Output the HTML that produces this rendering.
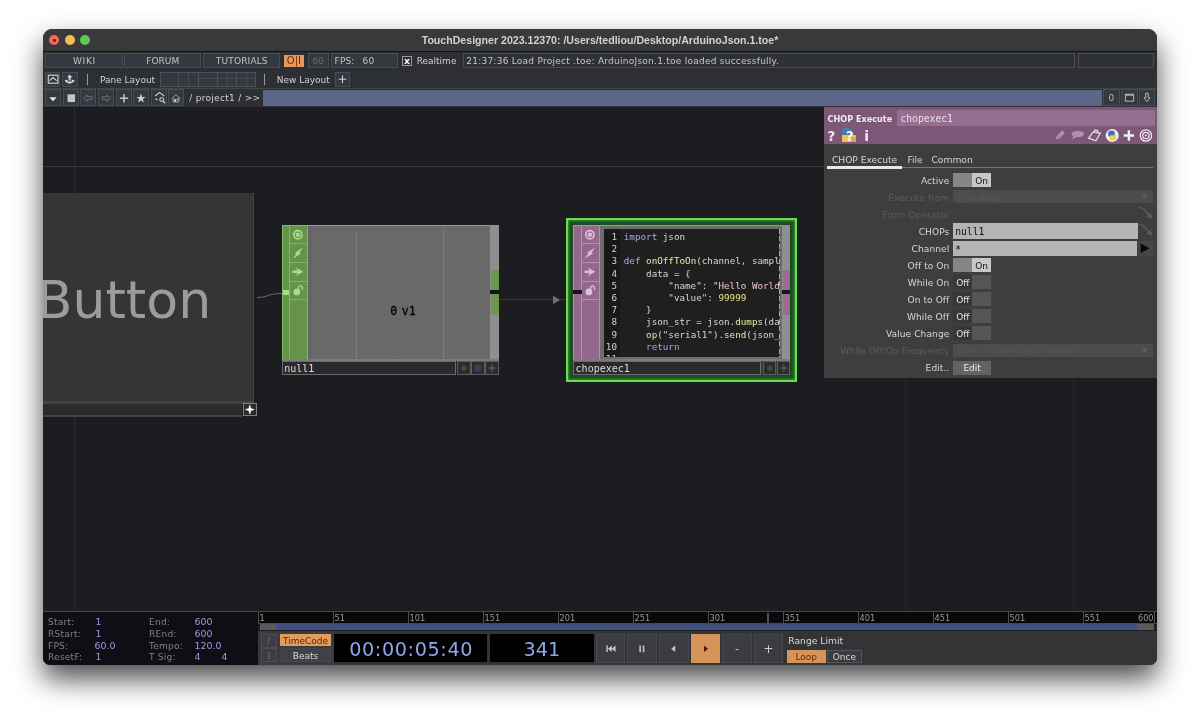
<!DOCTYPE html>
<html lang="en">
<head>
<meta charset="utf-8">
<title>TouchDesigner 2023.12370</title>
<style>
*{box-sizing:border-box;margin:0;padding:0}
html,body{width:1200px;height:723px;overflow:hidden;background:#fff}
body{font-family:"DejaVu Sans","Liberation Sans",sans-serif;font-size:9px;color:#cfcfcf;position:relative}
.win{position:absolute;left:43px;top:29px;width:1114px;height:636px;border-radius:9px 9px 7px 7px;overflow:hidden;background:#1c1d21}
.pg{position:absolute;left:-43px;top:-29px;width:1200px;height:723px;will-change:transform}
.pg div,.pg svg,.pg span.a{position:absolute}
.shadow{position:absolute;left:43px;top:29px;width:1114px;height:636px;border-radius:9px 9px 7px 7px;box-shadow:0 14px 28px 0 rgba(0,0,0,.70)}
.t{white-space:pre}
.m{white-space:pre;font-family:"DejaVu Sans Mono","Liberation Mono",monospace}
.b{background:#343941;border:1px solid #474c55}
.c{text-align:center}
</style>
</head>
<body>
<div class="shadow"></div>
<div class="win"><div class="pg">
<div style="left:43px;top:29px;width:1114px;height:22px;background:#39393b"></div>
<div style="left:43px;top:51px;width:1114px;height:1px;background:#141416"></div>
<div style="left:49.2px;top:35.2px;width:10.2px;height:10.2px;border-radius:50%;background:#ee6a5f"></div>
<div style="left:52.9px;top:38.9px;width:2.8px;height:2.8px;border-radius:50%;background:#7d120c"></div>
<div style="left:64.5px;top:35.2px;width:10.2px;height:10.2px;border-radius:50%;background:#f5bd4f"></div>
<div style="left:79.9px;top:35.2px;width:10.2px;height:10.2px;border-radius:50%;background:#62c554"></div>
<div class="t" style="left:43px;top:32px;font-size:10.6px;line-height:16px;height:16px;color:#d2d2d2;width:1114px;text-align:center;font-family:'Liberation Sans',sans-serif;font-weight:bold;">TouchDesigner 2023.12370: /Users/tedliou/Desktop/ArduinoJson.1.toe*</div>
<div style="left:43px;top:52px;width:1114px;height:55px;background:#2d2f34"></div>
<div class="b" style="left:45px;top:53px;width:77.5px;height:15px;"></div>
<div class="t" style="left:45.7px;top:54px;font-size:9px;line-height:14px;height:14px;color:#c2c4c8;width:77.5px;text-align:center;letter-spacing:0.7px;">WIKI</div>
<div class="b" style="left:124.3px;top:53px;width:77px;height:15px;"></div>
<div class="t" style="left:124.3px;top:54px;font-size:9px;line-height:14px;height:14px;color:#c2c4c8;width:77px;text-align:center;letter-spacing:0px;">FORUM</div>
<div class="b" style="left:203.3px;top:53px;width:76.7px;height:15px;"></div>
<div class="t" style="left:203.46px;top:54px;font-size:9px;line-height:14px;height:14px;color:#c2c4c8;width:76.7px;text-align:center;letter-spacing:0.16px;">TUTORIALS</div>
<div style="left:283.7px;top:54.7px;width:20.5px;height:12px;background:#e19a59"></div>
<div class="t" style="left:283.7px;top:53px;font-size:10px;line-height:15px;height:15px;color:#7a2408;width:20.5px;text-align:center;">O|I</div>
<div class="b" style="left:307.5px;top:53px;width:21.5px;height:15px;"></div>
<div class="t" style="left:307.5px;top:54px;font-size:9px;line-height:14px;height:14px;color:#646a73;width:21.5px;text-align:center;">60</div>
<div class="b" style="left:331px;top:53px;width:67px;height:15px;"></div>
<div class="t" style="left:334.6px;top:54px;font-size:9px;line-height:14px;height:14px;color:#c2c4c8;word-spacing:1.1px;letter-spacing:.12px;">FPS:  60</div>
<div style="left:402px;top:56px;width:10px;height:10px;border:1px solid #9c9c9c;background:#2d2f34"></div>
<div class="t" style="left:402px;top:53px;font-size:9.4px;line-height:15px;height:15px;color:#ffffff;width:10px;text-align:center;font-weight:bold;">x</div>
<div class="t" style="left:416.7px;top:54px;font-size:9px;line-height:14px;height:14px;color:#d2d2d2;">Realtime</div>
<div style="left:463px;top:53px;width:612px;height:15.2px;background:#2e3137;border:1px solid #494c53"></div>
<div class="t" style="left:466.2px;top:54px;font-size:9px;line-height:14px;height:14px;color:#c6c8cc;letter-spacing:.25px;">21:37:36 Load Project .toe: ArduinoJson.1.toe loaded successfully.</div>
<div style="left:1078px;top:53px;width:75.5px;height:15.2px;background:#2e3137;border:1px solid #494c53"></div>
<div class="b" style="left:45.2px;top:72.4px;width:15.3px;height:14.4px;"></div>
<svg style="left:45.2px;top:72.4px" width="15.3" height="14.4" viewBox="0 0 15.3 14.4"><rect x="3.3" y="3.2" width="9.6" height="8" fill="none" stroke="#d8d8d8" stroke-width="1.1"/><path d="M4.6 8.6 L8 5.6 L11.6 8.6" fill="none" stroke="#d8d8d8" stroke-width="1.1"/></svg>
<div class="b" style="left:62.4px;top:72.4px;width:15.4px;height:14.4px;"></div>
<svg style="left:62.4px;top:72.4px" width="15.4" height="14.4" viewBox="0 0 15.4 14.4"><path d="M7.7 2.6 L10.3 5.6 H8.6 V8.6 H6.8 V5.6 H5.1 Z" fill="#d8d8d8"/><path d="M2.6 8.4 L5.6 7.6 L5.6 9.4 L9.8 9.4 L9.8 7.6 L12.8 8.4 L11.4 10.2 L7.7 11.8 L4 10.2 Z" fill="#d8d8d8"/></svg>
<div style="left:87px;top:73.6px;width:1px;height:11.4px;background:#9a9a9a"></div>
<div class="t" style="left:99.9px;top:73px;font-size:9px;line-height:14px;height:14px;color:#d2d2d2;">Pane Layout</div>
<div style="left:160px;top:72px;width:95.5px;height:14.6px;background:#343941;border:1px solid #4b5059"></div>
<div style="left:178px;top:72px;width:1px;height:14.6px;background:#4b5059"></div>
<div style="left:197.5px;top:72px;width:1px;height:14.6px;background:#4b5059"></div>
<div style="left:217px;top:72px;width:1px;height:14.6px;background:#4b5059"></div>
<div style="left:236px;top:72px;width:1px;height:14.6px;background:#4b5059"></div>
<div style="left:188.3px;top:73px;width:1px;height:13px;background:#464b54"></div>
<div style="left:198.5px;top:78px;width:18.5px;height:1px;background:#464b54"></div>
<div style="left:218px;top:78px;width:18px;height:1px;background:#464b54"></div>
<div style="left:227px;top:73px;width:1px;height:13px;background:#464b54"></div>
<div style="left:237px;top:78px;width:18px;height:1px;background:#464b54"></div>
<div style="left:246px;top:73px;width:1px;height:13px;background:#464b54"></div>
<div style="left:264.2px;top:73.6px;width:1px;height:11.4px;background:#9a9a9a"></div>
<div class="t" style="left:276.7px;top:73px;font-size:9px;line-height:14px;height:14px;color:#d2d2d2;">New Layout</div>
<div class="b" style="left:335.3px;top:72.4px;width:15px;height:14.4px;"></div>
<svg style="left:335.3px;top:72.4px" width="15" height="14.4" viewBox="0 0 15 14.4"><path d="M7.5 3.4 V11 M3.7 7.2 H11.3" stroke="#d0d0d0" stroke-width="1.1" fill="none"/></svg>
<div style="left:43px;top:88.4px;width:1114px;height:0.8px;background:#3a4a3c"></div>
<div class="b" style="left:44.9px;top:89.3px;width:16px;height:16.3px;"></div>
<div class="b" style="left:62.55px;top:89.3px;width:16px;height:16.3px;"></div>
<div class="b" style="left:80.2px;top:89.3px;width:16px;height:16.3px;"></div>
<div class="b" style="left:97.85px;top:89.3px;width:16px;height:16.3px;"></div>
<div class="b" style="left:115.5px;top:89.3px;width:16px;height:16.3px;"></div>
<div class="b" style="left:133.15px;top:89.3px;width:16px;height:16.3px;"></div>
<div class="b" style="left:150.8px;top:89.3px;width:16px;height:16.3px;"></div>
<div class="b" style="left:168.45px;top:89.3px;width:16px;height:16.3px;"></div>
<svg style="left:44.9px;top:90px" width="16" height="16.3" viewBox="0 0 16 16.3"><path d="M4.3 7.3 H11.7 L8 11.3 Z" fill="#e4e4e4"/></svg>
<svg style="left:62.55px;top:90px" width="16" height="16.3" viewBox="0 0 16 16.3"><rect x="4.5" y="4.3" width="7.6" height="7.8" fill="#c4c4cc"/></svg>
<svg style="left:80.2px;top:90px" width="16" height="16.3" viewBox="0 0 16 16.3"><path d="M3.6 8.2 L7.2 5 V6.8 H12 V9.6 H7.2 V11.4 Z" fill="none" stroke="#6a6f78" stroke-width="1"/></svg>
<svg style="left:97.85px;top:90px" width="16" height="16.3" viewBox="0 0 16 16.3"><path d="M12.4 8.2 L8.8 5 V6.8 H4 V9.6 H8.8 V11.4 Z" fill="none" stroke="#6a6f78" stroke-width="1"/></svg>
<svg style="left:115.5px;top:90px" width="16" height="16.3" viewBox="0 0 16 16.3"><path d="M8 4 V12.4 M3.8 8.2 H12.2" stroke="#c8c8cc" stroke-width="1.5" fill="none"/></svg>
<svg style="left:133.15px;top:90px" width="16" height="16.3" viewBox="0 0 16 16.3"><path d="M8 3.6 L9.2 6.9 L12.7 7 L9.9 9.1 L10.9 12.5 L8 10.5 L5.1 12.5 L6.1 9.1 L3.3 7 L6.8 6.9 Z" fill="#ccccd0"/></svg>
<svg style="left:150.8px;top:90px" width="16" height="16.3" viewBox="0 0 16 16.3"><path d="M4.2 6 L8.5 2.4 L13.2 6 M4.5 8.7 L6.5 10" stroke="#d0d0d0" stroke-width="1.1" fill="none"/><circle cx="10.7" cy="9.6" r="1.9" fill="none" stroke="#d0d0d0" stroke-width="1.1"/><path d="M12 11 L14 13.2" stroke="#d0d0d0" stroke-width="1.3"/></svg>
<svg style="left:168.45px;top:90px" width="16" height="16.3" viewBox="0 0 16 16.3"><path d="M3.8 8.4 L8 4.6 L12.2 8.4 M5 7.8 V12 H11 V7.8" stroke="#9a9ea6" stroke-width="1" fill="none"/><rect x="6.2" y="9" width="2" height="3" fill="#c8c8c8"/><rect x="8.8" y="8.6" width="1.6" height="1.6" fill="#c8c8c8"/></svg>
<div class="t" style="left:189.2px;top:91px;font-size:9px;line-height:14px;height:14px;color:#d2d2d2;letter-spacing:.3px;">/ project1 / >></div>
<div style="left:263px;top:89.6px;width:839px;height:16.2px;background:#5c6688"></div>
<div class="b" style="left:1102.8px;top:89.3px;width:17.1px;height:16.7px;"></div>
<div class="b" style="left:1121px;top:89.3px;width:16.8px;height:16.7px;"></div>
<div class="b" style="left:1139px;top:89.3px;width:16px;height:16.7px;"></div>
<div class="t" style="left:1102.8px;top:91px;font-size:9px;line-height:14px;height:14px;color:#b8b8b8;width:17.1px;text-align:center;">0</div>
<svg style="left:1121px;top:89.3px" width="16.8" height="16.7" viewBox="0 0 16.8 16.7"><rect x="4.4" y="5.2" width="8.2" height="7" fill="none" stroke="#b4b4b4" stroke-width="1"/><path d="M4.4 6 H12.6" stroke="#b4b4b4" stroke-width="1.4"/></svg>
<svg style="left:1139px;top:89.3px" width="16" height="16.7" viewBox="0 0 16 16.7"><path d="M6.8 4.2 H9.2 V8.8 H11 L8 12.8 L5 8.8 H6.8 Z" fill="none" stroke="#b4b4b4" stroke-width="1"/></svg>
<div style="left:43px;top:107px;width:1114px;height:504.5px;background:#1c1d21"></div>
<div style="left:238px;top:107px;width:1px;height:504px;background:#1d1e23"></div>
<div style="left:405px;top:107px;width:1px;height:504px;background:#1d1e23"></div>
<div style="left:570px;top:107px;width:1px;height:504px;background:#1d1e23"></div>
<div style="left:741px;top:107px;width:1px;height:504px;background:#1d1e23"></div>
<div style="left:43px;top:503px;width:1114px;height:1px;background:#1d1e23"></div>
<div style="left:73.6px;top:107px;width:1px;height:504px;background:#2a2b30"></div>
<div style="left:905.2px;top:107px;width:1px;height:504px;background:#27282d"></div>
<div style="left:1072.6px;top:107px;width:1px;height:504px;background:#27282d"></div>
<div style="left:43px;top:166px;width:1114px;height:1px;background:#37383c"></div>
<div style="left:43px;top:193px;width:211.3px;height:208px;background:#353535;border-right:1px solid #454545"></div>
<div style="left:43px;top:401px;width:211.3px;height:2.8px;background:#424242"></div>
<div style="left:43px;top:403.8px;width:198.8px;height:10.8px;background:#2b2b2c"></div>
<div style="left:43px;top:414.6px;width:199px;height:2px;background:#424242"></div>
<div style="left:243px;top:402.6px;width:13.6px;height:13.2px;background:#2b2b2c;border:1px solid #808080"></div>
<svg style="left:243px;top:402.6px" width="13.6" height="13.2" viewBox="0 0 13.6 13.2"><path d="M6.8 2.2 L7.8 5.6 L11.2 6.6 L7.8 7.6 L6.8 11 L5.8 7.6 L2.4 6.6 L5.8 5.6 Z" fill="#ffffff" stroke="#ffffff" stroke-width=".6" stroke-linejoin="round"/></svg>
<div class="t" style="left:36.7px;top:268px;font-size:52.1px;line-height:64px;height:64px;color:#9c9c9c;">Button</div>
<svg style="left:250px;top:280px" width="40" height="30" viewBox="0 0 40 30"><path d="M7 17.5 C19 17.4 17 13.5 32 13.5" stroke="#6a6b66" stroke-width="1" fill="none"/></svg>
<div style="left:499px;top:298.8px;width:75px;height:1px;background:#38393c"></div>
<svg style="left:550px;top:293px" width="12" height="12" viewBox="0 0 12 12"><path d="M3 2.6 L10 6.9 L3 11.2 Z" fill="#707072"/></svg>
<div style="left:282px;top:225px;width:26.2px;height:134.6px;background:#66934a;border:1px solid #82bc60"></div>
<div style="left:289px;top:225px;width:1px;height:134.6px;background:#7fb65e"></div>
<div style="left:290px;top:243.4px;width:18px;height:1px;background:#7fb65e"></div>
<div style="left:290px;top:261.9px;width:18px;height:1px;background:#7fb65e"></div>
<div style="left:290px;top:280.5px;width:18px;height:1px;background:#7fb65e"></div>
<div style="left:290px;top:299px;width:18px;height:1px;background:#7fb65e"></div>
<div style="left:282.6px;top:289.8px;width:6.8px;height:5px;background:#a6e07c"></div>
<svg style="left:290px;top:225px" width="19" height="80" viewBox="0 0 19 80"><circle cx="7.9" cy="9.7" r="4.1" fill="none" stroke="#a9d98e" stroke-width="1.7"/><circle cx="7.9" cy="9.7" r="2.3" fill="#a9d98e"/><path d="M13.100000000000001 22.5 L4.9 27.8 L8.200000000000001 29.6 Z M2.7 33.7 L10.9 28.400000000000002 L7.6000000000000005 26.6 Z" fill="#a9d98e"/><path d="M2.5 45.5 H7.5 L5.9 42.5 L13.3 46.7 L5.9 50.900000000000006 L7.5 47.900000000000006 H2.5 Z" fill="#a9d98e"/><circle cx="6.9" cy="66.89999999999999" r="3.4" fill="#a9d98e"/><path d="M8.5 64.5 V62.3 A2.1 2.1 0 0 1 12.5 62.699999999999996 V65.1" fill="none" stroke="#a9d98e" stroke-width="1.4"/></svg>
<div style="left:308.2px;top:225px;width:181.8px;height:134.6px;background:#696969"></div>
<div style="left:308.2px;top:225px;width:190.8px;height:1px;background:#9a9a9a"></div>
<div style="left:308.2px;top:226px;width:2.8px;height:133.6px;background:#646464"></div>
<div style="left:356.3px;top:232px;width:1px;height:126px;background:#7e7e7e"></div>
<div style="left:443px;top:230px;width:1px;height:128px;background:#7e7e7e"></div>
<div style="left:398.3px;top:236px;width:1px;height:120px;background:repeating-linear-gradient(#727272 0 2px,#696969 2px 4px)"></div>
<div style="left:490px;top:225px;width:9px;height:134.6px;background:#8f8f91"></div>
<div style="left:490.8px;top:270px;width:8.2px;height:20.4px;background:#6b974c"></div>
<div style="left:490.8px;top:294px;width:8.2px;height:20.6px;background:#6b974c"></div>
<div style="left:490px;top:290.4px;width:9px;height:3.6px;background:#141518"></div>
<div style="left:282px;top:358.6px;width:217px;height:2px;background:#7c7c7c"></div>
<div class="m" style="left:390.2px;top:302px;font-size:11.6px;line-height:18px;height:18px;color:#060606;-webkit-text-stroke:.35px #060606;">0</div>
<div class="m" style="left:401.8px;top:302px;font-size:11.6px;line-height:18px;height:18px;color:#060606;-webkit-text-stroke:.35px #060606;">v1</div>
<div style="left:282.2px;top:360.6px;width:173.4px;height:14.2px;background:#2a2a2c;border:1px solid #6a6a6a"></div>
<div class="m" style="left:284.2px;top:361px;font-size:10px;line-height:15px;height:15px;color:#dcdcdc;">null1</div>
<div style="left:457.2px;top:360.6px;width:13.8px;height:14.2px;background:#2c2c2e;border:1px solid #5c5c5c"></div>
<div style="left:471.2px;top:360.6px;width:13.8px;height:14.2px;background:#2c2c2e;border:1px solid #5c5c5c"></div>
<div style="left:485.2px;top:360.6px;width:13.8px;height:14.2px;background:#2c2c2e;border:1px solid #5c5c5c"></div>
<svg style="left:457.2px;top:360.6px" width="42" height="14.2" viewBox="0 0 42 14.2"><circle cx="6.9" cy="7.1" r="2.7" fill="#47474a"/><rect x="17.4" y="3.8" width="6.8" height="6.8" fill="#3b3c5e"/><path d="M34.9 3.2 L35.8 6.2 L38.8 7.1 L35.8 8 L34.9 11 L34 8 L31 7.1 L34 6.2 Z" fill="#555558" stroke="#555558" stroke-width=".5"/></svg>
<div style="left:566.2px;top:218.2px;width:231.2px;height:163.8px;background:#1d4b22;border:2px solid #62e04a;box-shadow:inset 0 0 2.5px 1px #3c9a34"></div>
<div style="left:573px;top:225px;width:27px;height:134.6px;background:#93688c;border:1px solid #b88db1"></div>
<div style="left:581px;top:225px;width:1px;height:134.6px;background:#b88db1"></div>
<div style="left:582px;top:243.4px;width:18px;height:1px;background:#b88db1"></div>
<div style="left:582px;top:261.9px;width:18px;height:1px;background:#b88db1"></div>
<div style="left:582px;top:280.5px;width:18px;height:1px;background:#b88db1"></div>
<div style="left:582px;top:299px;width:18px;height:1px;background:#b88db1"></div>
<svg style="left:582px;top:225px" width="19" height="80" viewBox="0 0 19 80"><circle cx="7.9" cy="9.7" r="4.1" fill="none" stroke="#dfbcd9" stroke-width="1.7"/><circle cx="7.9" cy="9.7" r="2.3" fill="#dfbcd9"/><path d="M13.100000000000001 22.5 L4.9 27.8 L8.200000000000001 29.6 Z M2.7 33.7 L10.9 28.400000000000002 L7.6000000000000005 26.6 Z" fill="#dfbcd9"/><path d="M2.5 45.5 H7.5 L5.9 42.5 L13.3 46.7 L5.9 50.900000000000006 L7.5 47.900000000000006 H2.5 Z" fill="#dfbcd9"/><circle cx="6.9" cy="66.89999999999999" r="3.4" fill="#dfbcd9"/><path d="M8.5 64.5 V62.3 A2.1 2.1 0 0 1 12.5 62.699999999999996 V65.1" fill="none" stroke="#dfbcd9" stroke-width="1.4"/></svg>
<div style="left:573px;top:290.4px;width:8.6px;height:3.6px;background:#141518"></div>
<div style="left:600px;top:225px;width:181.8px;height:134.6px;background:#6c6c6c"></div>
<div style="left:600px;top:225px;width:190.4px;height:1px;background:#9a9a9a"></div>
<div style="left:604px;top:228.5px;width:175.4px;height:128.5px;background:#1f1f1f"></div>
<div style="left:604px;top:228.5px;width:16.4px;height:128.5px;background:#191919"></div>
<div style="left:781.8px;top:225px;width:8.6px;height:134.6px;background:#8f8f91"></div>
<div style="left:782.6px;top:270px;width:7px;height:20.4px;background:#9a6c94"></div>
<div style="left:782.6px;top:294px;width:7px;height:20.6px;background:#9a6c94"></div>
<div style="left:781.8px;top:290.4px;width:8.6px;height:3.6px;background:#141518"></div>
<div style="left:573px;top:358.6px;width:217.4px;height:2.2px;background:#7c7c7c"></div>
<div style="left:604px;top:228.5px;width:175px;height:128.5px;overflow:hidden"><div class="m" style="left:0;top:0.50px;height:15px;line-height:15px;font-size:9.25px;width:175px"><span class="a" style="left:0;width:13px;text-align:right;color:#d2d2d2">1</span><span class="a" style="left:19.8px"><span style="color:#a8a8f0">import</span><span style="color:#d6d6d6"> json</span></span></div><div class="m" style="left:0;top:12.50px;height:15px;line-height:15px;font-size:9.25px;width:175px"><span class="a" style="left:0;width:13px;text-align:right;color:#d2d2d2">2</span><span class="a" style="left:19.8px"></span></div><div class="m" style="left:0;top:24.50px;height:15px;line-height:15px;font-size:9.25px;width:175px"><span class="a" style="left:0;width:13px;text-align:right;color:#d2d2d2">3</span><span class="a" style="left:19.8px"><span style="color:#a8a8f0">def</span><span style="color:#d6d6d6"> </span><span style="color:#e8e8a2">onOffToOn</span><span style="color:#d6d6d6">(channel, sampl</span></span></div><div class="m" style="left:0;top:37.50px;height:15px;line-height:15px;font-size:9.25px;width:175px"><span class="a" style="left:0;width:13px;text-align:right;color:#d2d2d2">4</span><span class="a" style="left:19.8px"><span style="color:#d6d6d6">    data = {</span></span></div><div class="m" style="left:0;top:49.50px;height:15px;line-height:15px;font-size:9.25px;width:175px"><span class="a" style="left:0;width:13px;text-align:right;color:#d2d2d2">5</span><span class="a" style="left:19.8px"><span style="color:#d6d6d6">        "name": </span><span style="color:#f0c4c4">"Hello World</span></span></div><div class="m" style="left:0;top:61.50px;height:15px;line-height:15px;font-size:9.25px;width:175px"><span class="a" style="left:0;width:13px;text-align:right;color:#d2d2d2">6</span><span class="a" style="left:19.8px"><span style="color:#d6d6d6">        "value": </span><span style="color:#e4e48c">99999</span></span></div><div class="m" style="left:0;top:73.50px;height:15px;line-height:15px;font-size:9.25px;width:175px"><span class="a" style="left:0;width:13px;text-align:right;color:#d2d2d2">7</span><span class="a" style="left:19.8px"><span style="color:#d6d6d6">    }</span></span></div><div class="m" style="left:0;top:85.50px;height:15px;line-height:15px;font-size:9.25px;width:175px"><span class="a" style="left:0;width:13px;text-align:right;color:#d2d2d2">8</span><span class="a" style="left:19.8px"><span style="color:#d6d6d6">    json_str = json.</span><span style="color:#e8e8a2">dumps</span><span style="color:#d6d6d6">(da</span></span></div><div class="m" style="left:0;top:98.50px;height:15px;line-height:15px;font-size:9.25px;width:175px"><span class="a" style="left:0;width:13px;text-align:right;color:#d2d2d2">9</span><span class="a" style="left:19.8px"><span style="color:#d6d6d6">    </span><span style="color:#e8e8a2">op</span><span style="color:#d6d6d6">("serial1").</span><span style="color:#e8e8a2">send</span><span style="color:#d6d6d6">(json_</span></span></div><div class="m" style="left:0;top:110.50px;height:15px;line-height:15px;font-size:9.25px;width:175px"><span class="a" style="left:0;width:13px;text-align:right;color:#d2d2d2">10</span><span class="a" style="left:19.8px"><span style="color:#d6d6d6">    </span><span style="color:#a8a8f0">return</span></span></div><div class="m" style="left:0;top:122.50px;height:15px;line-height:15px;font-size:9.25px;width:175px"><span class="a" style="left:0;width:13px;text-align:right;color:#d2d2d2">11</span><span class="a" style="left:19.8px"></span></div></div>
<div style="left:778.6px;top:229px;width:1.1px;height:128px;background:repeating-linear-gradient(#a4a4a4 0 5px,#3a3a3a 5px 7.5px)"></div>
<div style="left:573.2px;top:360.8px;width:188.2px;height:14.1px;background:#2a2a2c;border:1px solid #6a6a6a"></div>
<div class="m" style="left:575.6px;top:361px;font-size:10px;line-height:15px;height:15px;color:#dcdcdc;">chopexec1</div>
<div style="left:762.8px;top:360.8px;width:13.7px;height:14.1px;background:#2c2c2e;border:1px solid #5c5c5c"></div>
<div style="left:776.7px;top:360.8px;width:13.7px;height:14.1px;background:#2c2c2e;border:1px solid #5c5c5c"></div>
<svg style="left:762.8px;top:360.8px" width="28" height="14.1" viewBox="0 0 28 14.1"><circle cx="6.9" cy="7.1" r="2.7" fill="#47474a"/><path d="M20.8 3.1 L21.7 6.1 L24.7 7 L21.7 7.9 L20.8 10.9 L19.9 7.9 L16.9 7 L19.9 6.1 Z" fill="#555558" stroke="#555558" stroke-width=".5"/></svg>
<div style="left:824.2px;top:107px;width:332.8px;height:270.8px;background:#3e3e3e"></div>
<div style="left:824.2px;top:107px;width:332.8px;height:37.3px;background:#7c5778"></div>
<div style="left:897.2px;top:110px;width:257.4px;height:15.8px;background:#966f90"></div>
<div class="t" style="left:827.6px;top:112px;font-size:9px;line-height:14px;height:14px;color:#f4ecf2;font-family:'DejaVu Sans Condensed','DejaVu Sans',sans-serif;font-weight:bold;font-stretch:condensed;">CHOP Execute</div>
<div class="m" style="left:900.4px;top:111px;font-size:9.7px;line-height:15px;height:15px;color:#eadfe8;">chopexec1</div>
<div class="t" style="left:827.6px;top:127px;font-size:13.4px;line-height:19px;height:19px;color:#f4ecf2;font-weight:bold;">?</div>
<div style="left:842.4px;top:127.8px;width:10px;height:9.2px;background:#4a78ac;border-radius:2px 2px 0 0"></div>
<div style="left:842.4px;top:134.6px;width:13.6px;height:7.8px;background:#e9c94f;border-radius:1px"></div>
<div style="left:850.6px;top:136.6px;width:5.4px;height:5.8px;background:#d4ae42"></div>
<div class="t" style="left:846px;top:127px;font-size:13.4px;line-height:19px;height:19px;color:#fbf7fa;font-weight:bold;">?</div>
<div class="t" style="left:864.2px;top:126px;font-size:13.8px;line-height:20px;height:20px;color:#f4ecf2;font-weight:bold;">i</div>
<svg style="left:1050px;top:126px" width="107" height="18" viewBox="0 0 107 18">
<path d="M8.4 10.8 L13.6 5.6" stroke="#b38eae" stroke-width="3.8" fill="none"/><path d="M5.9 13.4 L6.6 9.6 L9.6 12.4 Z" fill="#b38eae"/>
<ellipse cx="27.8" cy="8" rx="6.2" ry="3.1" fill="#b38eae"/><path d="M23.4 9.4 L22 13.4 L27 10.8 Z" fill="#b38eae"/>
<path d="M38.7 12.2 L43.2 5.9 L50.3 7.3 L45.8 14.8 Z" fill="none" stroke="#eadcE8" stroke-width="1.3"/><path d="M44.2 5.6 L45 3.9 L47.6 4.5 L47.8 6.5" fill="none" stroke="#eadce8" stroke-width="1.3"/>
<circle cx="62.2" cy="9.5" r="6.5" fill="#f4f4f4"/>
<path d="M58.2 10 V6.8 Q58.2 4.4 62 4.4 Q64.8 4.4 64.8 6.6 V8.6 Q64.8 9.8 63.4 9.8 H60.6 Q59.4 9.8 59.4 11 Z" fill="#3c74ad"/>
<path d="M66.2 9 V12.2 Q66.2 14.6 62.4 14.6 Q59.6 14.6 59.6 12.4 V10.6 Q59.6 9.4 61 9.4 H63.8 Q65 9.4 65 8.2 Z" fill="#efcb4e"/>
<path d="M78.9 4.3 V14.7 M73.7 9.5 H84.1" stroke="#f6eef4" stroke-width="2.4" fill="none"/>
<circle cx="95.9" cy="9.5" r="5.7" fill="none" stroke="#f1e6ef" stroke-width="1.3"/><circle cx="95.9" cy="9.5" r="3.2" fill="none" stroke="#f1e6ef" stroke-width="1.3"/><circle cx="95.9" cy="9.5" r="1.1" fill="#f1e6ef"/>
</svg>
<div class="t" style="left:832px;top:153px;font-size:9.1px;line-height:14px;height:14px;color:#d4d4d4;">CHOP Execute</div>
<div class="t" style="left:907.4px;top:153px;font-size:9px;line-height:14px;height:14px;color:#d4d4d4;">File</div>
<div class="t" style="left:931.4px;top:152px;font-size:9.2px;line-height:15px;height:15px;color:#d4d4d4;">Common</div>
<div style="left:827px;top:167.4px;width:326px;height:1px;background:#777"></div>
<div style="left:827px;top:166.4px;width:75.4px;height:2.2px;background:#e8e8e8"></div>
<div class="t" style="left:824.2px;top:174px;font-size:9.1px;line-height:14px;height:14px;color:#d6d6d6;width:125.2px;text-align:right;letter-spacing:.06px;">Active</div>
<div style="left:953.3px;top:173.3px;width:19px;height:13.5px;background:#868686"></div>
<div style="left:972.3px;top:173.3px;width:18.7px;height:13.5px;background:#c8c8c8"></div>
<div class="t" style="left:972.3px;top:174px;font-size:9px;line-height:14px;height:14px;color:#161616;width:18.7px;text-align:center;">On</div>
<div class="t" style="left:824.2px;top:191px;font-size:9.1px;line-height:14px;height:14px;color:#5c5c5c;width:125.2px;text-align:right;letter-spacing:.06px;">Execute from</div>
<div style="left:953.3px;top:190.3px;width:199.5px;height:13px;background:#4c4c4c"></div>
<div class="t" style="left:957px;top:191px;font-size:9px;line-height:14px;height:14px;color:#575757;">This Node</div>
<svg style="left:1141px;top:194.3px" width="8" height="6" viewBox="0 0 8 6"><path d="M0.6 0.8 H7.4 L4 5 Z" fill="#5e5e5e"/></svg>
<div class="t" style="left:824.2px;top:208px;font-size:9.1px;line-height:14px;height:14px;color:#5c5c5c;width:125.2px;text-align:right;letter-spacing:.06px;">From Operator</div>
<div class="t" style="left:824.2px;top:225px;font-size:9.1px;line-height:14px;height:14px;color:#d6d6d6;width:125.2px;text-align:right;letter-spacing:.06px;">CHOPs</div>
<div style="left:953.3px;top:223.3px;width:184.5px;height:15.7px;background:#b4b4b4"></div>
<div class="m" style="left:955.2px;top:224px;font-size:9.7px;line-height:15px;height:15px;color:#0e0e0e;">null1</div>
<div class="t" style="left:824.2px;top:242px;font-size:9.1px;line-height:14px;height:14px;color:#d6d6d6;width:125.2px;text-align:right;letter-spacing:.06px;">Channel</div>
<div style="left:953.3px;top:241px;width:183.5px;height:14.7px;background:#b4b4b4"></div>
<div class="m" style="left:955.2px;top:242px;font-size:9.7px;line-height:15px;height:15px;color:#0e0e0e;">*</div>
<div style="left:1138.4px;top:241px;width:14.4px;height:14.7px;background:#464646"></div>
<svg style="left:1138.4px;top:241px" width="14.4" height="14.7" viewBox="0 0 14.4 14.7"><path d="M2.6 2.6 L11.6 7.3 L2.6 12 Z" fill="#060606"/></svg>
<svg style="left:1137px;top:204.3px" width="18" height="18" viewBox="0 0 18 18"><path d="M2 3.6 C6.4 3.8 7.4 5.6 11.6 10.6" stroke="#5a5a5a" stroke-width="1.5" fill="none"/><path d="M15.6 14.8 L9.4 12.6 L13.6 8.6 Z" fill="#5c5c5c"/></svg>
<svg style="left:1137px;top:221.3px" width="18" height="18" viewBox="0 0 18 18"><path d="M2 3.6 C6.4 3.8 7.4 5.6 11.6 10.6" stroke="#5a5a5a" stroke-width="1.5" fill="none"/><path d="M15.6 14.8 L9.4 12.6 L13.6 8.6 Z" fill="#5c5c5c"/></svg>
<div class="t" style="left:824.2px;top:259px;font-size:9.1px;line-height:14px;height:14px;color:#d6d6d6;width:125.2px;text-align:right;letter-spacing:.06px;">Off to On</div>
<div style="left:953.3px;top:258.3px;width:19px;height:13.5px;background:#868686"></div>
<div style="left:972.3px;top:258.3px;width:18.7px;height:13.5px;background:#c8c8c8"></div>
<div class="t" style="left:972.3px;top:259px;font-size:9px;line-height:14px;height:14px;color:#161616;width:18.7px;text-align:center;">On</div>
<div class="t" style="left:824.2px;top:276px;font-size:9.1px;line-height:14px;height:14px;color:#d6d6d6;width:125.2px;text-align:right;letter-spacing:.06px;">While On</div>
<div style="left:953.3px;top:275.3px;width:19px;height:13.5px;background:#373737"></div>
<div style="left:972.3px;top:275.3px;width:18.7px;height:13.5px;background:#555557"></div>
<div class="t" style="left:953.3px;top:276px;font-size:9px;line-height:14px;height:14px;color:#e2e2e2;width:19px;text-align:center;">Off</div>
<div class="t" style="left:824.2px;top:293px;font-size:9.1px;line-height:14px;height:14px;color:#d6d6d6;width:125.2px;text-align:right;letter-spacing:.06px;">On to Off</div>
<div style="left:953.3px;top:292.3px;width:19px;height:13.5px;background:#373737"></div>
<div style="left:972.3px;top:292.3px;width:18.7px;height:13.5px;background:#555557"></div>
<div class="t" style="left:953.3px;top:293px;font-size:9px;line-height:14px;height:14px;color:#e2e2e2;width:19px;text-align:center;">Off</div>
<div class="t" style="left:824.2px;top:310px;font-size:9.1px;line-height:14px;height:14px;color:#d6d6d6;width:125.2px;text-align:right;letter-spacing:.06px;">While Off</div>
<div style="left:953.3px;top:309.3px;width:19px;height:13.5px;background:#373737"></div>
<div style="left:972.3px;top:309.3px;width:18.7px;height:13.5px;background:#555557"></div>
<div class="t" style="left:953.3px;top:310px;font-size:9px;line-height:14px;height:14px;color:#e2e2e2;width:19px;text-align:center;">Off</div>
<div class="t" style="left:824.2px;top:327px;font-size:9.1px;line-height:14px;height:14px;color:#d6d6d6;width:125.2px;text-align:right;letter-spacing:.06px;">Value Change</div>
<div style="left:953.3px;top:326.3px;width:19px;height:13.5px;background:#373737"></div>
<div style="left:972.3px;top:326.3px;width:18.7px;height:13.5px;background:#555557"></div>
<div class="t" style="left:953.3px;top:327px;font-size:9px;line-height:14px;height:14px;color:#e2e2e2;width:19px;text-align:center;">Off</div>
<div class="t" style="left:824.2px;top:344px;font-size:9.1px;line-height:14px;height:14px;color:#5c5c5c;width:125.2px;text-align:right;letter-spacing:.06px;">While Off/On Frequency</div>
<div style="left:953.3px;top:343.9px;width:199.5px;height:13.4px;background:#4c4c4c"></div>
<div class="t" style="left:957px;top:344px;font-size:9px;line-height:14px;height:14px;color:#555555;">Every Frame (Last Sample)</div>
<svg style="left:1141px;top:347.90000000000003px" width="8" height="6" viewBox="0 0 8 6"><path d="M0.6 0.8 H7.4 L4 5 Z" fill="#5e5e5e"/></svg>
<div class="t" style="left:824.2px;top:361px;font-size:9.1px;line-height:14px;height:14px;color:#d6d6d6;width:125.2px;text-align:right;letter-spacing:.06px;">Edit..</div>
<div style="left:953.3px;top:360.7px;width:37.7px;height:14.3px;background:#646464"></div>
<div class="t" style="left:953.3px;top:361px;font-size:9px;line-height:14px;height:14px;color:#ececec;width:37.7px;text-align:center;">Edit</div>
<div style="left:43px;top:611.4px;width:1114px;height:53.6px;background:#343437"></div>
<div style="left:43px;top:611.4px;width:215px;height:53.6px;background:#0e0e14"></div>
<div style="left:43px;top:611.2px;width:1114px;height:1px;background:#46474b"></div>
<div class="t" style="left:48px;top:615px;font-size:9px;line-height:14px;height:14px;color:#808086;letter-spacing:.25px;">Start:</div>
<div class="t" style="left:149px;top:615px;font-size:9px;line-height:14px;height:14px;color:#808086;letter-spacing:.25px;">End:</div>
<div class="t" style="left:95.4px;top:614px;font-size:9.4px;line-height:15px;height:15px;color:#9c9cea;">1</div>
<div class="t" style="left:194.6px;top:614px;font-size:9.4px;line-height:15px;height:15px;color:#9c9cea;">600</div>
<div class="t" style="left:48px;top:627px;font-size:9px;line-height:14px;height:14px;color:#808086;letter-spacing:.25px;">RStart:</div>
<div class="t" style="left:149px;top:627px;font-size:9px;line-height:14px;height:14px;color:#808086;letter-spacing:.25px;">REnd:</div>
<div class="t" style="left:95.4px;top:626px;font-size:9.4px;line-height:15px;height:15px;color:#9c9cea;">1</div>
<div class="t" style="left:194.6px;top:626px;font-size:9.4px;line-height:15px;height:15px;color:#9c9cea;">600</div>
<div class="t" style="left:48px;top:639px;font-size:9px;line-height:14px;height:14px;color:#808086;letter-spacing:.25px;">FPS:</div>
<div class="t" style="left:149px;top:639px;font-size:9px;line-height:14px;height:14px;color:#808086;letter-spacing:.25px;">Tempo:</div>
<div class="t" style="left:94.6px;top:638px;font-size:9.4px;line-height:15px;height:15px;color:#9c9cea;">60.0</div>
<div class="t" style="left:194.6px;top:638px;font-size:9.4px;line-height:15px;height:15px;color:#9c9cea;">120.0</div>
<div class="t" style="left:48px;top:650px;font-size:9px;line-height:14px;height:14px;color:#808086;letter-spacing:.25px;">ResetF:</div>
<div class="t" style="left:149px;top:650px;font-size:9px;line-height:14px;height:14px;color:#808086;letter-spacing:.25px;">T Sig:</div>
<div class="t" style="left:95.4px;top:649px;font-size:9.4px;line-height:15px;height:15px;color:#9c9cea;">1</div>
<div class="t" style="left:194.6px;top:649px;font-size:9.4px;line-height:15px;height:15px;color:#9c9cea;">4</div>
<div class="t" style="left:221.6px;top:649px;font-size:9.4px;line-height:15px;height:15px;color:#9c9cea;">4</div>
<div style="left:258px;top:612.2px;width:899px;height:10.8px;background:#09090b"></div>
<div style="left:258px;top:622.6px;width:899px;height:1px;background:#4a4a42"></div>
<div style="left:258px;top:612.2px;width:1px;height:10.8px;background:#505046"></div>
<div class="t" style="left:259.6px;top:611px;font-size:8.2px;line-height:14px;height:14px;color:#989898;">1</div>
<div style="left:333px;top:612.2px;width:1px;height:10.8px;background:#505046"></div>
<div class="t" style="left:334.6px;top:611px;font-size:8.2px;line-height:14px;height:14px;color:#989898;">51</div>
<div style="left:408px;top:612.2px;width:1px;height:10.8px;background:#505046"></div>
<div class="t" style="left:409.6px;top:611px;font-size:8.2px;line-height:14px;height:14px;color:#989898;">101</div>
<div style="left:483px;top:612.2px;width:1px;height:10.8px;background:#505046"></div>
<div class="t" style="left:484.6px;top:611px;font-size:8.2px;line-height:14px;height:14px;color:#989898;">151</div>
<div style="left:558px;top:612.2px;width:1px;height:10.8px;background:#505046"></div>
<div class="t" style="left:559.6px;top:611px;font-size:8.2px;line-height:14px;height:14px;color:#989898;">201</div>
<div style="left:633px;top:612.2px;width:1px;height:10.8px;background:#505046"></div>
<div class="t" style="left:634.6px;top:611px;font-size:8.2px;line-height:14px;height:14px;color:#989898;">251</div>
<div style="left:708px;top:612.2px;width:1px;height:10.8px;background:#505046"></div>
<div class="t" style="left:709.6px;top:611px;font-size:8.2px;line-height:14px;height:14px;color:#989898;">301</div>
<div style="left:783px;top:612.2px;width:1px;height:10.8px;background:#505046"></div>
<div class="t" style="left:784.6px;top:611px;font-size:8.2px;line-height:14px;height:14px;color:#989898;">351</div>
<div style="left:858px;top:612.2px;width:1px;height:10.8px;background:#505046"></div>
<div class="t" style="left:859.6px;top:611px;font-size:8.2px;line-height:14px;height:14px;color:#989898;">401</div>
<div style="left:933px;top:612.2px;width:1px;height:10.8px;background:#505046"></div>
<div class="t" style="left:934.6px;top:611px;font-size:8.2px;line-height:14px;height:14px;color:#989898;">451</div>
<div style="left:1008px;top:612.2px;width:1px;height:10.8px;background:#505046"></div>
<div class="t" style="left:1009.6px;top:611px;font-size:8.2px;line-height:14px;height:14px;color:#989898;">501</div>
<div style="left:1083px;top:612.2px;width:1px;height:10.8px;background:#505046"></div>
<div class="t" style="left:1084.6px;top:611px;font-size:8.2px;line-height:14px;height:14px;color:#989898;">551</div>
<div class="t" style="left:1120px;top:611px;font-size:8.2px;line-height:14px;height:14px;color:#989898;width:33.6px;text-align:right;">600</div>
<div style="left:767px;top:613px;width:2.4px;height:9.6px;background:#4a5066"></div>
<div style="left:1154.4px;top:612.2px;width:1px;height:10.8px;background:#5a5a4e"></div>
<div style="left:258px;top:623.6px;width:899px;height:7.4px;background:#1e1f24"></div>
<div style="left:260px;top:624.2px;width:16px;height:6.2px;background:#5a5a5c"></div>
<div style="left:276px;top:624.2px;width:860.6px;height:6.2px;background:#414f7c"></div>
<div style="left:1137px;top:624.2px;width:16.6px;height:6.2px;background:#5a5a5c"></div>
<div style="left:258px;top:631px;width:75.6px;height:34px;background:#393b41"></div>
<div class="b" style="left:260.8px;top:633.8px;width:16px;height:13.8px;background:#3b3d43;border-color:#4c4e54"></div>
<div class="b" style="left:260.8px;top:648.2px;width:16px;height:13.4px;background:#3b3d43;border-color:#4c4e54"></div>
<div class="t" style="left:260.8px;top:634px;font-size:9px;line-height:14px;height:14px;color:#707078;width:16px;text-align:center;">/</div>
<div class="t" style="left:260.8px;top:649px;font-size:9px;line-height:14px;height:14px;color:#707078;width:16px;text-align:center;font-family:'DejaVu Serif',serif;">I</div>
<div style="left:279.8px;top:634.2px;width:51.4px;height:12.1px;background:#e19c5c"></div>
<div class="t" style="left:279.8px;top:634px;font-size:9px;line-height:14px;height:14px;color:#64200a;width:51.4px;text-align:center;">TimeCode</div>
<div style="left:279.8px;top:647.8px;width:51.4px;height:14.2px;background:#3f4147;border:1px solid #44464c"></div>
<div class="t" style="left:279.8px;top:649px;font-size:9px;line-height:14px;height:14px;color:#d8d8d8;width:51.4px;text-align:center;">Beats</div>
<div style="left:333.6px;top:633.8px;width:153.2px;height:29.2px;background:#000;border-bottom:1px solid #2e2e30"></div>
<div class="t" style="left:333.6px;top:636px;font-size:19.2px;line-height:27px;height:27px;color:#8fa6ea;width:155px;text-align:center;letter-spacing:.62px;">00:00:05:40</div>
<div style="left:489.8px;top:633.8px;width:103.9px;height:29.2px;background:#000;border-bottom:1px solid #2e2e30"></div>
<div class="t" style="left:489.8px;top:636px;font-size:19.2px;line-height:27px;height:27px;color:#8fa6ea;width:104px;text-align:center;">341</div>
<div style="left:595.8px;top:633.8px;width:29.6px;height:29.2px;background:#3b3c41;border:1px solid #47484d"></div>
<div style="left:627.4px;top:633.8px;width:29.6px;height:29.2px;background:#3b3c41;border:1px solid #47484d"></div>
<div style="left:659px;top:633.8px;width:29.6px;height:29.2px;background:#3b3c41;border:1px solid #47484d"></div>
<div style="left:690.6px;top:633.8px;width:29.6px;height:29.2px;background:#d6935a"></div>
<div style="left:722.2px;top:633.8px;width:29.6px;height:29.2px;background:#3b3c41;border:1px solid #47484d"></div>
<div style="left:753.8px;top:633.8px;width:29.6px;height:29.2px;background:#3b3c41;border:1px solid #47484d"></div>
<svg style="left:595.8px;top:633.8px" width="29.6" height="29.2" viewBox="0 0 29.6 29.2"><path d="M10.4 11.6 H11.8 V18 H10.4 Z M15.8 11.6 V18 L11.9 14.8 Z M19.6 11.6 V18 L15.7 14.8 Z" fill="#c8c8cc"/></svg>
<svg style="left:627.4px;top:633.8px" width="29.6" height="29.2" viewBox="0 0 29.6 29.2"><path d="M12.4 11.4 H13.9 V18.2 H12.4 Z M15.8 11.4 H17.3 V18.2 H15.8 Z" fill="#c8c8cc"/></svg>
<svg style="left:659px;top:633.8px" width="29.6" height="29.2" viewBox="0 0 29.6 29.2"><path d="M16.2 11.6 V18 L12.2 14.8 Z" fill="#c8c8cc"/></svg>
<svg style="left:690.6px;top:633.8px" width="29.6" height="29.2" viewBox="0 0 29.6 29.2"><path d="M13 11.4 V18 L17 14.7 Z" fill="#5a1208"/></svg>
<div class="t" style="left:722.2px;top:640px;font-size:11px;line-height:17px;height:17px;color:#c8c8cc;width:29.6px;text-align:center;">-</div>
<div class="t" style="left:753.8px;top:640px;font-size:12px;line-height:18px;height:18px;color:#d0d0d4;width:29.6px;text-align:center;">+</div>
<div class="t" style="left:788.3px;top:633px;font-size:9.2px;line-height:15px;height:15px;color:#d8d8d8;">Range Limit</div>
<div style="left:786.8px;top:650.2px;width:39px;height:12.8px;background:#d6935a"></div>
<div class="t" style="left:786.8px;top:650px;font-size:9px;line-height:14px;height:14px;color:#6a1c06;width:39px;text-align:center;">Loop</div>
<div style="left:826.8px;top:650.2px;width:35px;height:12.8px;background:#3a3b40;border:1px solid #55565b"></div>
<div class="t" style="left:826.8px;top:650px;font-size:9px;line-height:14px;height:14px;color:#d8d8d8;width:35px;text-align:center;">Once</div>
</div></div>
</body>
</html>
